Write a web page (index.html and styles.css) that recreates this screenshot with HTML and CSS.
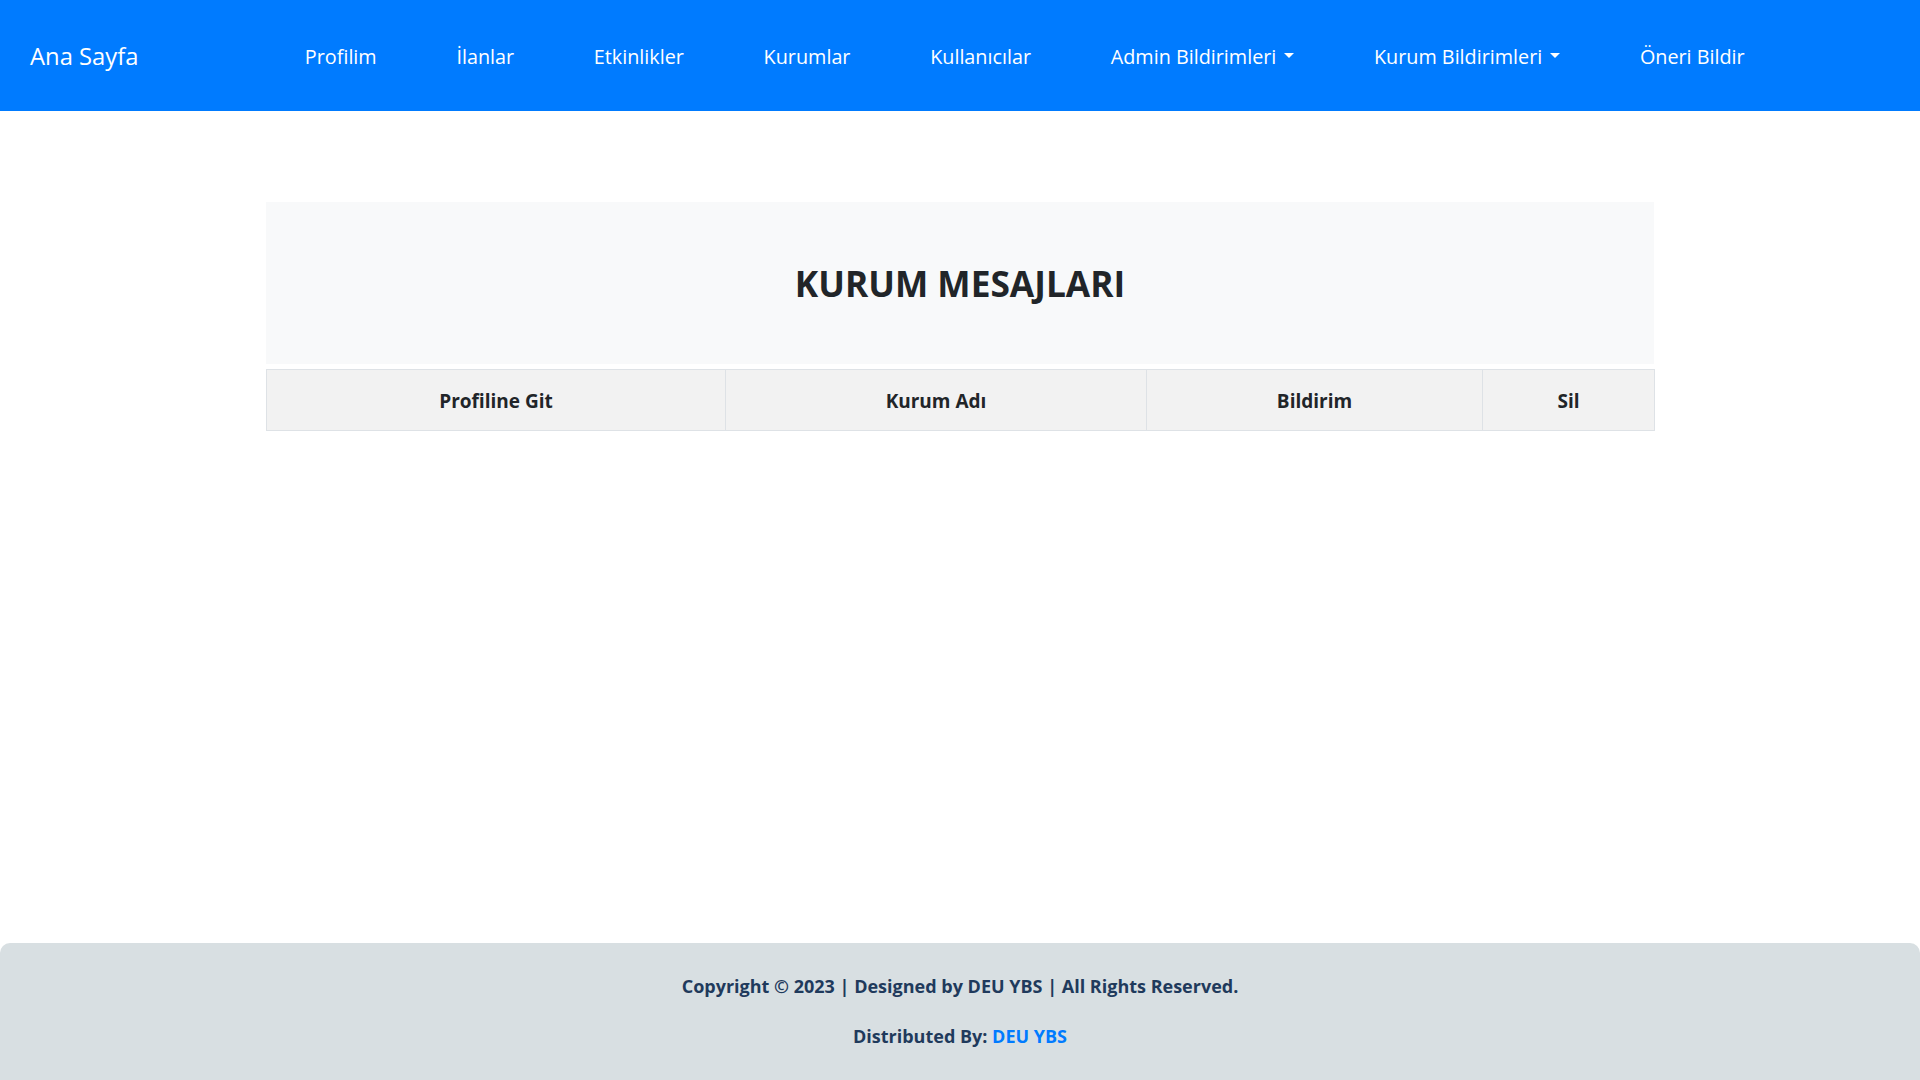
FILE: index.html
```html
<!DOCTYPE html>
<html lang="tr">
<head>
<meta charset="utf-8">
<title>Kurum Mesajları</title>
<link rel="stylesheet" href="styles.css">
</head>
<body>
<nav class="navbar">
  <a class="brand" href="#">Ana Sayfa</a>
  <ul class="nav-list">
    <li><a class="nav-link" href="#">Profilim</a></li>
    <li><a class="nav-link" href="#">İlanlar</a></li>
    <li><a class="nav-link" href="#">Etkinlikler</a></li>
    <li><a class="nav-link" href="#">Kurumlar</a></li>
    <li><a class="nav-link" href="#">Kullanıcılar</a></li>
    <li><a class="nav-link dropdown-toggle" href="#">Admin Bildirimleri</a></li>
    <li><a class="nav-link dropdown-toggle" href="#">Kurum Bildirimleri</a></li>
    <li><a class="nav-link" href="#">Öneri Bildir</a></li>
  </ul>
</nav>

<main class="main">
  <div class="container">
    <div class="jumbotron">
      <h1 class="page-title">KURUM MESAJLARI</h1>
    </div>
    <table class="msg-table">
      <colgroup>
        <col class="col-profile">
        <col class="col-name">
        <col class="col-msg">
        <col class="col-del">
      </colgroup>
      <thead>
        <tr>
          <th>Profiline Git</th>
          <th>Kurum Adı</th>
          <th>Bildirim</th>
          <th>Sil</th>
        </tr>
      </thead>
      <tbody></tbody>
    </table>
  </div>
</main>

<footer class="footer">
  <p class="footer-line">Copyright © 2023 | Designed by DEU YBS | All Rights Reserved.</p>
  <p class="footer-line">Distributed By: <a class="footer-link" href="#">DEU YBS</a></p>
</footer>
</body>
</html>
```

FILE: styles.css
```css
* { box-sizing: border-box; }

html, body {
  margin: 0;
  padding: 0;
}

body {
  font-family: "Segoe UI", "Open Sans", "Noto Sans", sans-serif;
  color: #212529;
  background: #ffffff;
  min-height: 100vh;
  display: flex;
  flex-direction: column;
  overflow: hidden;
}

a { text-decoration: none; }

/* ---------- navbar ---------- */
.navbar {
  height: 111px;
  background: #007bff;
  display: flex;
  align-items: center;
  padding: 0 0 0 30px;
  flex-shrink: 0;
}

.brand {
  color: #ffffff;
  font-size: 23.8px;
  line-height: 30px;
  width: 235px;
  flex-shrink: 0;
}

.nav-list {
  list-style: none;
  margin: 0;
  padding: 0;
  display: flex;
  align-items: center;
}

.nav-link {
  display: block;
  color: #ffffff;
  font-size: 19.8px;
  line-height: 28px;
  padding: 2px 39.85px 0;
  white-space: nowrap;
}

.dropdown-toggle::after {
  content: "";
  display: inline-block;
  margin-left: 0.4em;
  vertical-align: 0.255em;
  border-top: 0.3em solid #ffffff;
  border-right: 0.3em solid transparent;
  border-left: 0.3em solid transparent;
  border-bottom: 0;
}

/* ---------- main ---------- */
.main {
  flex: 1;
}

.container {
  width: 1388px;
  margin: 91px auto 0;
}

.jumbotron {
  background: #f8f9fa;
  height: 162px;
  display: flex;
  align-items: center;
  justify-content: center;
  margin-bottom: 5px;
}

.page-title {
  margin: 0;
  font-size: 35.3px;
  font-weight: 700;
  line-height: 40px;
  color: #212529;
  padding-top: 0;
}

.msg-table {
  width: 1388px;
  border-collapse: collapse;
  table-layout: fixed;
}

.col-profile { width: 459px; }
.col-name { width: 421px; }
.col-msg { width: 336px; }
.col-del { width: 172px; }

.msg-table th {
  background: #f2f2f2;
  border: 1px solid #dee2e6;
  height: 61px;
  font-size: 19px;
  font-weight: 700;
  text-align: center;
  vertical-align: middle;
  color: #212529;
  padding: 1px 0 0;
}

/* ---------- footer ---------- */
.footer {
  background: #d8dfe2;
  border-radius: 10px 10px 0 0;
  padding: 30px 0;
  text-align: center;
  flex-shrink: 0;
}

.footer-line {
  margin: 0 0 23px;
  font-size: 18px;
  line-height: 27px;
  font-weight: 700;
  color: #1f3a5c;
}

.footer-line:last-child { margin-bottom: 0; }

.footer-link { color: #007bff; }
```
